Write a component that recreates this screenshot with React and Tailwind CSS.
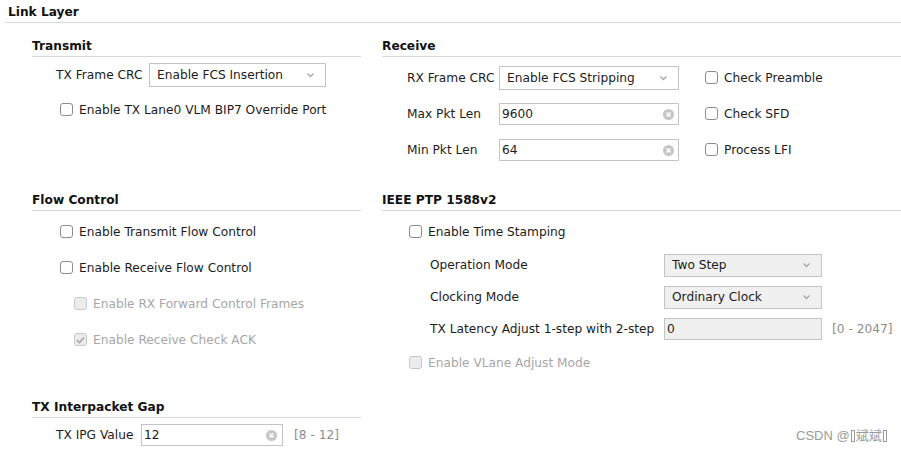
import React from "react";

const FONT = { fontFamily: '"DejaVu Sans", Verdana, sans-serif' };

function Chevron() {
  return (
    <svg width="9" height="6" viewBox="0 0 9 6" className="shrink-0">
      <path d="M1.5 1.5 L4.5 4.5 L7.5 1.5" fill="none" stroke="#a8a8a8" strokeWidth="1.4" />
    </svg>
  );
}

function ClearIcon() {
  return (
    <svg width="11" height="11" viewBox="0 0 11 11" className="shrink-0">
      <circle cx="5.5" cy="5.5" r="5.5" fill="#c6c6c6" />
      <path d="M3.5 3.5 L7.5 7.5 M7.5 3.5 L3.5 7.5" stroke="#fff" strokeWidth="1.5" />
    </svg>
  );
}

function Select({ value, w, gray, h = "h-[24px]" }) {
  return (
    <div
      className={`${w} ${h} ${gray ? "bg-[#f0f0f0]" : "bg-white"} border border-[#c4c4c4] flex items-center justify-between pl-[7px] pr-[10px] shrink-0`}
    >
      <span className="text-[#1c1c1c] pt-[1px]">{value}</span>
      <Chevron />
    </div>
  );
}

function Input({ value, w, clear = true, gray, pr = "pr-[4px]" }) {
  return (
    <div
      className={`${w} h-[22px] ${gray ? "bg-[#f0f0f0]" : "bg-white"} border border-[#c4c4c4] flex items-center justify-between pl-[2px] ${pr} shrink-0`}
    >
      <span className="text-[#1c1c1c] pt-[1px]">{value}</span>
      {clear && <ClearIcon />}
    </div>
  );
}

function Checkbox({ label, disabled, checked }) {
  return (
    <div className="flex items-center gap-[6px]">
      <div
        className={`w-[13px] h-[13px] rounded-[3px] border flex items-center justify-center shrink-0 ${
          disabled ? "border-[#c8c8c8] bg-[#ececec]" : "border-[#8c8c8c] bg-white"
        }`}
      >
        {checked && (
          <svg width="9" height="8" viewBox="0 0 9 8">
            <path d="M1 4 L3.5 6.5 L8 1.5" fill="none" stroke="#a6a6a6" strokeWidth="1.6" />
          </svg>
        )}
      </div>
      <span className={`pt-[1px] ${disabled ? "text-[#a6a6a6]" : "text-[#1c1c1c]"}`}>{label}</span>
    </div>
  );
}

function SectionHeader({ title }) {
  return (
    <div className="h-[22px] border-b border-[#d6d6d6] flex items-center pt-[2px] font-bold text-[#111]">
      {title}
    </div>
  );
}

export default function App() {
  return (
    <div
      className="w-[901px] h-[452px] bg-white relative overflow-hidden text-[12.2px] leading-none text-[#1c1c1c]"
      style={FONT}
    >
      <div className="ml-[5px] h-[23px] border-b border-[#d6d6d6] flex items-center pl-[3px] pt-[3px] font-bold text-[#111]">
        Link Layer
      </div>

      <div className="flex pl-[32px] gap-[21px]">
        {/* Left column */}
        <div className="w-[329px] flex flex-col">
          <div className="mt-[12px]">
            <SectionHeader title="Transmit" />
          </div>
          <div className="mt-[6px] flex items-center pl-[24px]">
            <span className="w-[93px] pt-[1px]">TX Frame CRC</span>
            <Select value="Enable FCS Insertion" w="w-[177px]" />
          </div>
          <div className="mt-[11px] h-[24px] flex items-center pl-[28px]">
            <Checkbox label="Enable TX Lane0 VLM BIP7 Override Port" />
          </div>

          <div className="mt-[67px]">
            <SectionHeader title="Flow Control" />
          </div>
          <div className="mt-[3px] flex flex-col">
            <div className="h-[36px] flex items-center pl-[28px]">
              <Checkbox label="Enable Transmit Flow Control" />
            </div>
            <div className="h-[36px] flex items-center pl-[28px]">
              <Checkbox label="Enable Receive Flow Control" />
            </div>
            <div className="h-[36px] flex items-center pl-[42px]">
              <Checkbox label="Enable RX Forward Control Frames" disabled />
            </div>
            <div className="h-[36px] flex items-center pl-[42px]">
              <Checkbox label="Enable Receive Check ACK" disabled checked />
            </div>
          </div>

          <div className="mt-[38px]">
            <SectionHeader title="TX Interpacket Gap" />
          </div>
          <div className="mt-[6px] flex items-center pl-[24px]">
            <span className="w-[85px] pt-[1px]">TX IPG Value</span>
            <Input value="12" w="w-[142px]" pr="pr-[5px]" />
            <span className="ml-[11px] pt-[1px] text-[#8c8c8c]">[8 - 12]</span>
          </div>
        </div>

        {/* Right column */}
        <div className="flex-1 flex flex-col">
          <div className="mt-[12px]">
            <SectionHeader title="Receive" />
          </div>
          <div className="mt-[3px] flex flex-col">
            <div className="h-[36px] flex items-center pl-[25px]">
              <span className="w-[92px] pt-[1px]">RX Frame CRC</span>
              <Select value="Enable FCS Stripping" w="w-[180px]" />
              <div className="ml-[26px]">
                <Checkbox label="Check Preamble" />
              </div>
            </div>
            <div className="h-[36px] flex items-center pl-[25px]">
              <span className="w-[92px] pt-[1px]">Max Pkt Len</span>
              <Input value="9600" w="w-[180px]" />
              <div className="ml-[26px]">
                <Checkbox label="Check SFD" />
              </div>
            </div>
            <div className="h-[36px] flex items-center pl-[25px]">
              <span className="w-[92px] pt-[1px]">Min Pkt Len</span>
              <Input value="64" w="w-[180px]" />
              <div className="ml-[26px]">
                <Checkbox label="Process LFI" />
              </div>
            </div>
          </div>

          <div className="mt-[21px]">
            <SectionHeader title="IEEE PTP 1588v2" />
          </div>
          <div className="mt-[3px] flex flex-col">
            <div className="h-[35px] flex items-center pl-[27px]">
              <Checkbox label="Enable Time Stamping" />
            </div>
            <div className="h-[32px] flex items-center pl-[48px]">
              <span className="w-[234px] pt-[1px]">Operation Mode</span>
              <Select value="Two Step" w="w-[158px]" h="h-[23px]" gray />
            </div>
            <div className="h-[32px] flex items-center pl-[48px]">
              <span className="w-[234px] pt-[1px]">Clocking Mode</span>
              <Select value="Ordinary Clock" w="w-[158px]" h="h-[23px]" gray />
            </div>
            <div className="h-[32px] flex items-center pl-[48px]">
              <span className="w-[234px] pt-[1px]">TX Latency Adjust 1-step with 2-step</span>
              <Input value="0" w="w-[158px]" clear={false} gray />
              <span className="ml-[10px] pt-[1px] text-[#8c8c8c]">[0 - 2047]</span>
            </div>
            <div className="h-[36px] flex items-center pl-[27px]">
              <Checkbox label="Enable VLane Adjust Mode" disabled />
            </div>
          </div>
        </div>
      </div>

      <div
        className="absolute left-[796px] top-[429px] flex items-center text-[13px] text-[#9a9a9a]"
        style={{ fontFamily: '"Liberation Sans", "Noto Sans CJK SC", sans-serif' }}
      >
        <span>CSDN @</span>
        <span className="inline-block w-[4px] h-[12px] border border-[#9a9a9a] mx-[1px]" />
        <span>斌斌</span>
        <span className="inline-block w-[4px] h-[12px] border border-[#9a9a9a] mx-[1px]" />
      </div>
    </div>
  );
}
